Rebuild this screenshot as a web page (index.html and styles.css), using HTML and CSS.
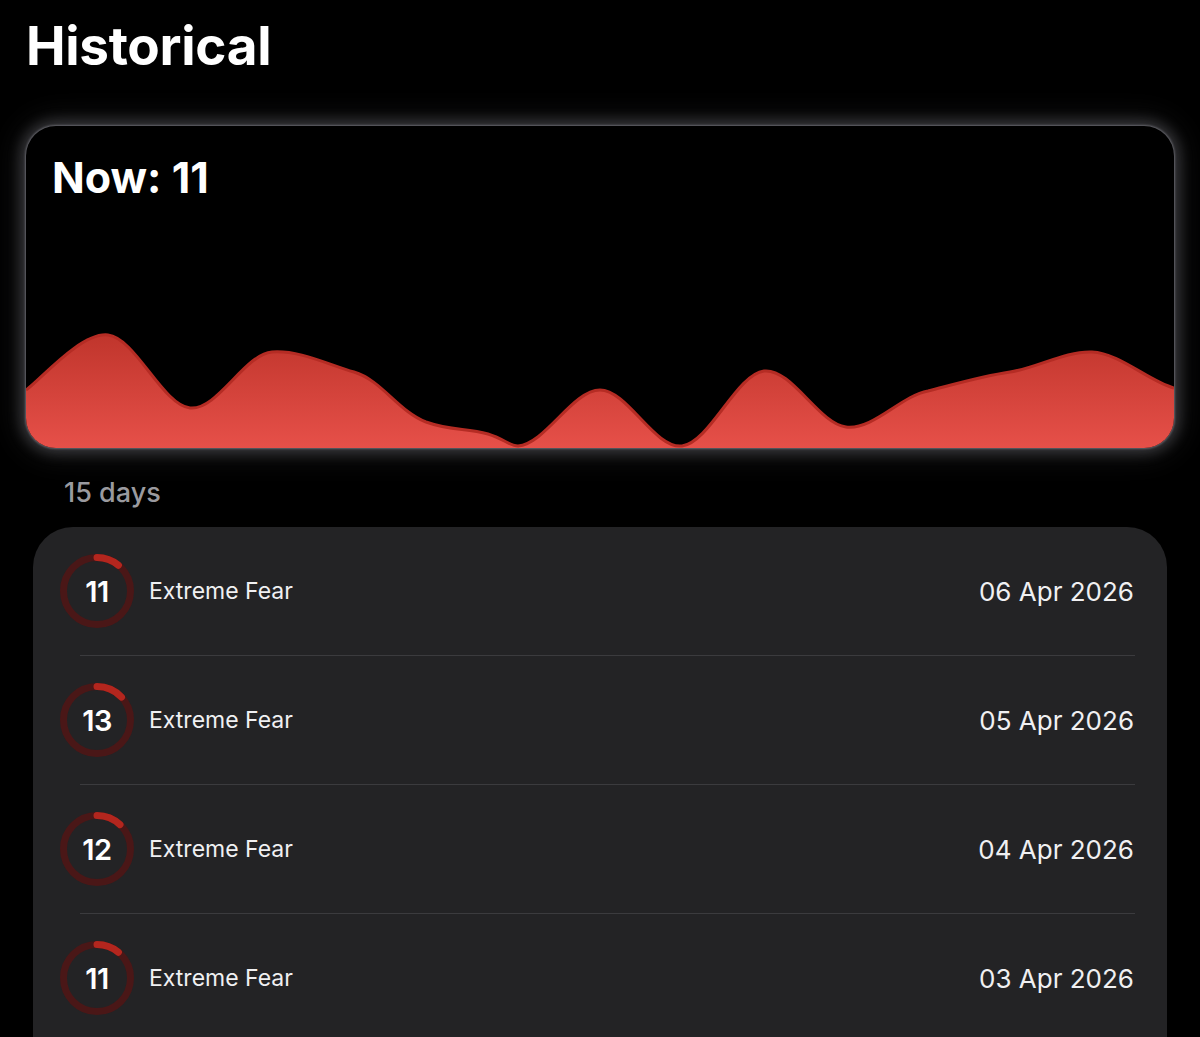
FILE: index.html
```html
<!DOCTYPE html>
<html lang="en">
<head>
<meta charset="utf-8">
<title>Historical</title>
<link rel="stylesheet" href="styles.css">
</head>
<body>
<main class="page">
  <h1 class="title">Historical</h1>

  <section class="chart-card">
    <div class="now">Now: 11</div>
    <svg class="chart" viewBox="0 190 1148 132" preserveAspectRatio="none" aria-hidden="true">
      <defs>
        <linearGradient id="fill" x1="0" y1="0" x2="0" y2="1">
          <stop offset="0" stop-color="#c0352c"/>
          <stop offset="1" stop-color="#e9524b"/>
        </linearGradient>
      </defs>
      <path class="area" fill="url(#fill)" d="M0,264 C13.67,254.83 54.67,206 82,209 C109.33,212 136.67,279.17 164,282 C191.33,284.83 218.67,228 246,226 C273.33,224 300.67,238 328,246 C355.33,254 372,285 400,296 C425,305 440,302 462,308 C478,313 484,320 492,320 C519.33,318 546.67,264 574,264 C601.33,264 628.67,323.17 656,320 C683.33,316.83 710.67,248.17 738,245 C765.33,241.83 792.67,297.67 820,301 C847.33,304.33 874.67,270 902,265 C929.33,258 956.67,250 984,246 C1011.33,242 1038.67,225 1066,226 C1093.33,227 1124,256 1148,262 L1148,330 L0,330 Z"/>
      <path class="line" d="M0,264 C13.67,254.83 54.67,206 82,209 C109.33,212 136.67,279.17 164,282 C191.33,284.83 218.67,228 246,226 C273.33,224 300.67,238 328,246 C355.33,254 372,285 400,296 C425,305 440,302 462,308 C478,313 484,320 492,320 C519.33,318 546.67,264 574,264 C601.33,264 628.67,323.17 656,320 C683.33,316.83 710.67,248.17 738,245 C765.33,241.83 792.67,297.67 820,301 C847.33,304.33 874.67,270 902,265 C929.33,258 956.67,250 984,246 C1011.33,242 1038.67,225 1066,226 C1093.33,227 1124,256 1148,262"/>
    </svg>
  </section>

  <div class="range">15 days</div>

  <section class="list">
    <div class="row">
      <div class="ring">
        <svg viewBox="0 0 74 74"><circle class="track" cx="37" cy="37" r="33.5"/><circle class="arc" cx="37" cy="37" r="33.5" stroke-dasharray="23.2 300"/></svg>
        <span class="val">11</span>
      </div>
      <span class="label">Extreme Fear</span>
      <span class="date">06 Apr 2026</span>
    </div>
    <div class="divider"></div>
    <div class="row">
      <div class="ring">
        <svg viewBox="0 0 74 74"><circle class="track" cx="37" cy="37" r="33.5"/><circle class="arc" cx="37" cy="37" r="33.5" stroke-dasharray="27.4 300"/></svg>
        <span class="val">13</span>
      </div>
      <span class="label">Extreme Fear</span>
      <span class="date">05 Apr 2026</span>
    </div>
    <div class="divider"></div>
    <div class="row">
      <div class="ring">
        <svg viewBox="0 0 74 74"><circle class="track" cx="37" cy="37" r="33.5"/><circle class="arc" cx="37" cy="37" r="33.5" stroke-dasharray="25.3 300"/></svg>
        <span class="val">12</span>
      </div>
      <span class="label">Extreme Fear</span>
      <span class="date">04 Apr 2026</span>
    </div>
    <div class="divider"></div>
    <div class="row">
      <div class="ring">
        <svg viewBox="0 0 74 74"><circle class="track" cx="37" cy="37" r="33.5"/><circle class="arc" cx="37" cy="37" r="33.5" stroke-dasharray="23.2 300"/></svg>
        <span class="val">11</span>
      </div>
      <span class="label">Extreme Fear</span>
      <span class="date">03 Apr 2026</span>
    </div>
  </section>
</main>
</body>
</html>
```

FILE: styles.css
```css
html, body {
  margin: 0;
  padding: 0;
  background: #000;
  height: 100%;
  overflow: hidden;
}

body {
  font-family: Inter, "Noto Sans", "Liberation Sans", sans-serif;
  color: #fff;
}

.page {
  display: flex;
  flex-direction: column;
  padding-top: 20px;
}

.title {
  margin: 0 0 0 26px;
  font-size: 53px;
  line-height: 52px;
  font-weight: 700;
  letter-spacing: -0.3px;
}

.chart-card {
  margin: 54px 26px 0 26px;
  height: 322px;
  background: #000;
  border-radius: 30px;
  overflow: hidden;
  display: flex;
  flex-direction: column;
  box-shadow: 0 0 2px 1px rgba(110, 110, 118, 0.8), 0 0 14px 5px rgba(150, 150, 160, 0.32), 0 0 30px 8px rgba(120, 120, 130, 0.18);
}

.now {
  padding: 30px 0 0 26px;
  font-size: 43px;
  line-height: 43px;
  font-weight: 700;
  letter-spacing: 0;
}

.chart {
  margin-top: auto;
  display: block;
  width: 1148px;
  height: 132px;
}

.chart .line {
  fill: none;
  stroke: #b52c24;
  stroke-width: 3;
}

.range {
  margin: 31px 0 0 64px;
  font-size: 27px;
  line-height: 27px;
  font-weight: 500;
  color: #9a9a9f;
}

.list {
  margin: 21px 33px 0 33px;
  padding-bottom: 80px;
  background: #232325;
  border-radius: 40px;
  display: flex;
  flex-direction: column;
}

.row {
  height: 128px;
  display: flex;
  align-items: center;
  padding: 0 33px 0 27px;
}

.divider {
  height: 1px;
  background: #3b3b3e;
  margin: 0 32px 0 47px;
}

.ring {
  position: relative;
  width: 74px;
  height: 74px;
  flex: none;
  display: flex;
  align-items: center;
  justify-content: center;
}

.ring svg {
  position: absolute;
  inset: 0;
  width: 74px;
  height: 74px;
  transform: rotate(-90deg);
}

.ring .track {
  fill: none;
  stroke: #4a1717;
  stroke-width: 7;
}

.ring .arc {
  fill: none;
  stroke: #b3261e;
  stroke-width: 7;
  stroke-linecap: round;
}

.val {
  position: relative;
  font-size: 29px;
  font-weight: 600;
  color: #fff;
  letter-spacing: -0.5px;
}

.label {
  margin-left: 15px;
  font-size: 23px;
  color: #f0f0f2;
}

.date {
  margin-left: auto;
  font-size: 26px;
  color: #f0f0f2;
}
```
